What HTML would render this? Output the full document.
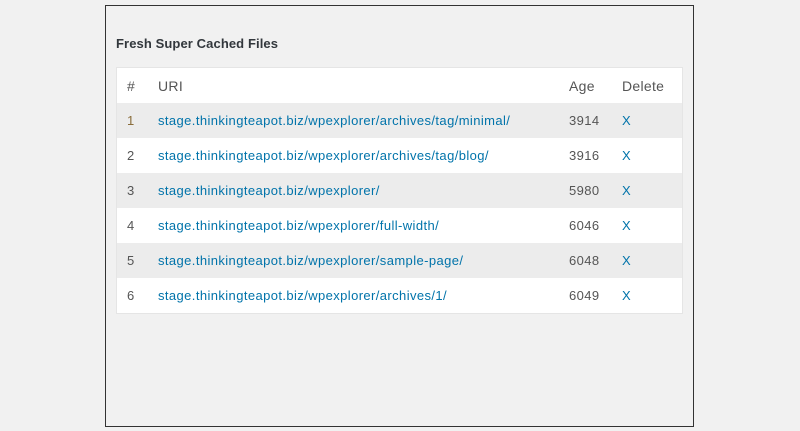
<!DOCTYPE html>
<html><head><style>
body{margin:0;width:800px;height:431px;background:#f1f1f1;font-family:"Liberation Sans",sans-serif;overflow:hidden;position:relative}
.box{position:absolute;left:105px;top:5px;width:587px;height:420px;border:1px solid #333;background:#f1f1f1}
h3{position:absolute;left:10px;top:30px;margin:0;font-size:13px;font-weight:bold;color:#32373c;letter-spacing:0.1px}
table{position:absolute;left:11px;top:62px;width:565px;border-collapse:collapse;background:#fff;box-shadow:0 0 0 1px #e5e5e5;font-size:13px;letter-spacing:0.4px}
td,th{height:35px;padding:0;text-align:left;font-weight:normal}
th{font-size:14px;color:#555;letter-spacing:0.3px}
td{color:#555}
a{color:#0073aa;text-decoration:none}
tr.alt{background:#ececec}
.c1{padding-left:10px;width:31px}.c3{width:53px}.c4{width:60px}
</style></head><body>
<div class="box">
<h3>Fresh Super Cached Files</h3>
<table>
<tr><th class="c1">#</th><th>URI</th><th class="c3">Age</th><th class="c4">Delete</th></tr>
<tr class="alt"><td class="c1" style="color:#8a6d3b">1</td><td><a>stage.thinkingteapot.biz/wpexplorer/archives/tag/minimal/</a></td><td>3914</td><td><a>X</a></td></tr>
<tr><td class="c1">2</td><td><a>stage.thinkingteapot.biz/wpexplorer/archives/tag/blog/</a></td><td>3916</td><td><a>X</a></td></tr>
<tr class="alt"><td class="c1">3</td><td><a>stage.thinkingteapot.biz/wpexplorer/</a></td><td>5980</td><td><a>X</a></td></tr>
<tr><td class="c1">4</td><td><a>stage.thinkingteapot.biz/wpexplorer/full-width/</a></td><td>6046</td><td><a>X</a></td></tr>
<tr class="alt"><td class="c1">5</td><td><a>stage.thinkingteapot.biz/wpexplorer/sample-page/</a></td><td>6048</td><td><a>X</a></td></tr>
<tr><td class="c1">6</td><td><a>stage.thinkingteapot.biz/wpexplorer/archives/1/</a></td><td>6049</td><td><a>X</a></td></tr>
</table>
</div>
</body></html>
